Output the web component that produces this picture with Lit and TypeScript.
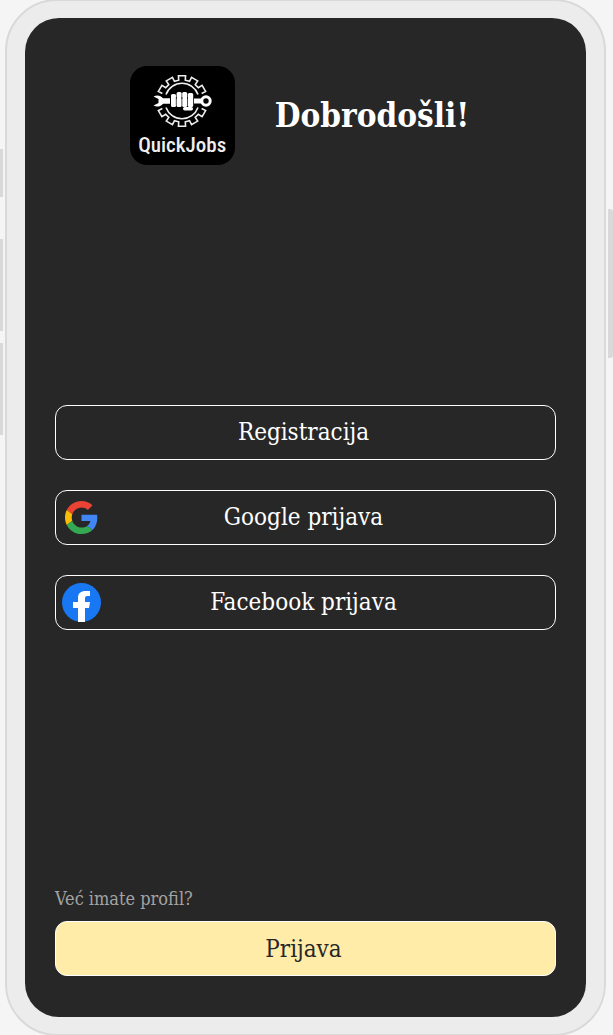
import { css, html, LitElement, svg } from "lit";
import { customElement, property } from "lit/decorators.js";

// Outline of one half of the gear, five teeth centred on the given angle.
function gearArc(middle: number) {
  const points: string[] = [];
  const add = (degrees: number, radius: number) => {
    const a = (degrees * Math.PI) / 180;
    const x = 52 + radius * Math.cos(a);
    const y = 35 + radius * Math.sin(a);
    points.push(`${x.toFixed(2)},${y.toFixed(2)}`);
  };
  for (let tooth = -2; tooth <= 2; tooth++) {
    const a = middle + tooth * 30;
    add(a - 9, 21);
    add(a - 8, 25.5);
    add(a + 8, 25.5);
    add(a + 9, 21);
  }
  return points.join(" ");
}

const googleIcon = svg`
  <svg class="icon" width="33" height="33" viewBox="0 0 48 48" aria-hidden="true">
    <path fill="#ea4335" d="M24 9.500c3.540 0 6.710 1.220 9.210 3.600l6.850-6.850C35.900 2.380 30.470 0 24 0 14.620 0 6.510 5.380 2.560 13.220l7.980 6.190C12.430 13.720 17.740 9.500 24 9.500z" />
    <path fill="#4285f4" d="M46.980 24.550c0-1.570-.15-3.090-.38-4.550H24v9.020h12.940c-.58 2.960-2.260 5.480-4.780 7.180l7.730 6c4.510-4.180 7.090-10.360 7.090-17.650z" />
    <path fill="#fbbc05" d="M10.530 28.590c-.48-1.450-.76-2.990-.76-4.590s.27-3.140.76-4.590l-7.980-6.190C.92 16.460 0 20.120 0 24c0 3.880.92 7.540 2.560 10.780l7.970-6.190z" />
    <path fill="#34a853" d="M24 48c6.480 0 11.930-2.130 15.890-5.810l-7.730-6c-2.150 1.450-4.920 2.300-8.160 2.300-6.260 0-11.570-4.220-13.470-9.910l-7.980 6.190C6.510 42.620 14.620 48 24 48z" />
  </svg>
`;

const facebookIcon = svg`
  <svg class="icon" width="39" height="39" viewBox="0 0 39 39" aria-hidden="true">
    <circle cx="19.500" cy="19.500" r="19.500" fill="#1877f2" />
    <path fill="#fff" d="M16 39V25h-5v-6h5v-4c0-5 3-7 7.500-7H28v5h-2.600c-2 0-2.400 1.200-2.400 2.600V19h5l-1 6h-4v14z" />
  </svg>
`;

@customElement("quick-logo")
export class QuickLogoElement extends LitElement {
  static styles = css`
    :host {
      display: flex;
      flex-direction: column;
      align-items: center;
      width: 105px;
      height: 99px;
      border-radius: 17px;
      background: #000;
      overflow: hidden;
    }

    .name {
      color: #eee;
      font: 500 21px/30px "Liberation Sans Narrow", "Roboto Condensed",
        "Open Sans Condensed", Roboto, sans-serif;
    }
  `;

  render() {
    return html`
      <svg width="105" height="64" viewBox="0 0 105 64" aria-hidden="true">
        <g fill="none" stroke="#eee" stroke-width="1.6">
          <polyline points=${gearArc(-90)} />
          <polyline points=${gearArc(90)} />
          <path d="M36 28.500a17 17 0 0 1 32 0M36 41.500a17 17 0 0 0 32 0" />
        </g>
        <g fill="#fff">
          <path
            d="M23.500 30.500c3.500-2 7.500-1 9.500 1.800H40v5.400h-7c-2 2.800-6 3.800-9.500 1.800l5-2.500v-4z"
          />
          <path d="M64 32.500h8v5h-8z" />
          <rect x="41" y="28" width="5" height="13" rx="1.500" />
          <rect x="46.600" y="26" width="5" height="15" rx="1.500" />
          <rect x="52.200" y="26" width="5" height="15" rx="1.500" />
          <rect x="57.800" y="27" width="5.400" height="14" rx="1.500" />
          <path d="M42 33h20v6H42z" />
          <rect x="53" y="41" width="10" height="3.500" rx="1.700" />
        </g>
        <path
          fill="none"
          stroke="#000"
          stroke-width=".7"
          d="M46.300 31v8M51.900 31v8M57.500 31v8"
        />
        <circle cx="76" cy="35" r="4.200" fill="none" stroke="#fff" stroke-width="3" />
      </svg>
      <span class="name">QuickJobs</span>
    `;
  }
}

@customElement("phone-frame")
export class PhoneFrameElement extends LitElement {
  static styles = css`
    :host {
      display: grid;
      grid-template-columns: 5px minmax(0, 1fr) 7px;
      min-height: 100vh;
      background: #f5f5f5;
      overflow: hidden;
    }

    .rail {
      display: flex;
      flex-direction: column;
    }
    .rail--left {
      padding: 149px 2px 0 0;
    }
    .rail--right {
      padding: 209px 0 0 2px;
    }

    .key {
      background: #d9d9d9;
    }
    .key--mute {
      height: 48px;
      margin-bottom: 42px;
    }
    .key--volume {
      height: 92px;
      margin-bottom: 12px;
    }
    .key--power {
      height: 149px;
      border-radius: 0 3px 3px 0;
    }

    .case {
      display: flex;
      box-sizing: border-box;
      margin: -1px 0;
      padding: 17px 18px;
      border: 2px solid #d9d9d9;
      border-radius: 52px;
      background: #ececec;
    }

    .screen {
      display: flex;
      flex: 1;
      flex-direction: column;
      box-sizing: border-box;
      min-width: 0;
      padding: 48px 30px 41px;
      border-radius: 34px;
      background: #272727;
    }
  `;

  render() {
    return html`
      <div class="rail rail--left">
        <div class="key key--mute"></div>
        <div class="key key--volume"></div>
        <div class="key key--volume"></div>
      </div>
      <div class="case">
        <div class="screen"><slot></slot></div>
      </div>
      <div class="rail rail--right">
        <div class="key key--power"></div>
      </div>
    `;
  }
}

@customElement("quick-button")
export class QuickButtonElement extends LitElement {
  @property()
  variant: "outline" | "filled" = "outline";

  @property()
  icon: "none" | "google" | "facebook" = "none";

  static styles = css`
    :host {
      display: block;
    }

    button {
      display: grid;
      grid-template-columns: 39px 1fr 39px;
      align-items: center;
      box-sizing: border-box;
      width: 100%;
      height: 55px;
      padding: 0 10px 0 6px;
      border: 1px solid #fff;
      border-radius: 12px;
      background: none;
      color: #fff;
      font: 24px/32px "Roboto Slab", "DejaVu Serif Condensed", "DejaVu Serif",
        serif;
      cursor: pointer;
    }

    .button--filled {
      background: #ffeca9;
      color: #272727;
    }

    .icon {
      grid-column: 1;
      justify-self: center;
    }

    .label {
      grid-column: 2;
      white-space: nowrap;
    }
  `;

  render() {
    return html`
      <button type="button" class=${`button--${this.variant}`}>
        ${this.icon === "google" ? googleIcon : ""}
        ${this.icon === "facebook" ? facebookIcon : ""}
        <span class="label"><slot></slot></span>
      </button>
    `;
  }
}

@customElement("app-root")
export class AppRootElement extends LitElement {
  static styles = css`
    :host {
      display: block;
      font-family: "Roboto Slab", "DejaVu Serif Condensed", "DejaVu Serif",
        serif;
    }

    .header {
      display: flex;
      align-items: center;
      justify-content: center;
      gap: 40px;
      padding-right: 12px;
    }

    .title {
      margin: 0;
      color: #fff;
      font-size: 33px;
      font-weight: 700;
      line-height: 48px;
    }

    .actions {
      display: flex;
      flex-direction: column;
      gap: 30px;
      margin: auto 0;
    }

    .footer {
      display: flex;
      flex-direction: column;
      gap: 10px;
      padding-top: 18px;
    }

    .hint {
      margin: 0;
      color: #a3a3a3;
      font-size: 18px;
      line-height: 24px;
    }
  `;

  render() {
    return html`
      <phone-frame>
        <header class="header">
          <quick-logo></quick-logo>
          <h1 class="title">Dobrodošli!</h1>
        </header>
        <main class="actions">
          <quick-button>Registracija</quick-button>
          <quick-button icon="google">Google prijava</quick-button>
          <quick-button icon="facebook">Facebook prijava</quick-button>
        </main>
        <footer class="footer">
          <p class="hint">Već imate profil?</p>
          <quick-button variant="filled">Prijava</quick-button>
        </footer>
      </phone-frame>
    `;
  }
}

declare global {
  interface HTMLElementTagNameMap {
    "app-root": AppRootElement;
    "phone-frame": PhoneFrameElement;
    "quick-button": QuickButtonElement;
    "quick-logo": QuickLogoElement;
  }
}
